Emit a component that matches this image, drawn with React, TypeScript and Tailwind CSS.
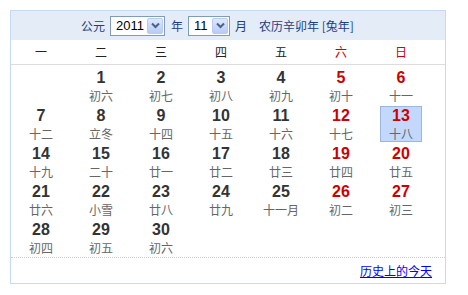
import React from 'react';

type Day = { d: number; l: string; red?: boolean; today?: boolean } | null;

const weeks: Day[][] = [
  [null, { d: 1, l: '初六' }, { d: 2, l: '初七' }, { d: 3, l: '初八' }, { d: 4, l: '初九' }, { d: 5, l: '初十', red: true }, { d: 6, l: '十一', red: true }],
  [{ d: 7, l: '十二' }, { d: 8, l: '立冬' }, { d: 9, l: '十四' }, { d: 10, l: '十五' }, { d: 11, l: '十六' }, { d: 12, l: '十七', red: true }, { d: 13, l: '十八', red: true, today: true }],
  [{ d: 14, l: '十九' }, { d: 15, l: '二十' }, { d: 16, l: '廿一' }, { d: 17, l: '廿二' }, { d: 18, l: '廿三' }, { d: 19, l: '廿四', red: true }, { d: 20, l: '廿五', red: true }],
  [{ d: 21, l: '廿六' }, { d: 22, l: '小雪' }, { d: 23, l: '廿八' }, { d: 24, l: '廿九' }, { d: 25, l: '十一月' }, { d: 26, l: '初二', red: true }, { d: 27, l: '初三', red: true }],
  [{ d: 28, l: '初四' }, { d: 29, l: '初五' }, { d: 30, l: '初六' }, null, null, null, null],
];

const weekdays = ['一', '二', '三', '四', '五', '六', '日'];

function FakeSelect({ value, width }: { value: string; width: string }) {
  return (
    <div className={`flex h-[20px] items-center justify-between border border-[#7f9db9] bg-white ${width}`}>
      <span className="pl-[5px] text-[13px] leading-none text-black font-['Liberation_Sans',sans-serif]">{value}</span>
      <span className="mr-[1px] flex h-[16px] w-[16px] items-center justify-center rounded-[2px] border border-[#b9cbf3] bg-gradient-to-b from-[#dfe8fe] to-[#b6cbf6]">
        <svg width="9" height="7" viewBox="0 0 9 7">
          <path d="M1 1.5 L4.5 5 L8 1.5" fill="none" stroke="#4d6185" strokeWidth="2" />
        </svg>
      </span>
    </div>
  );
}

export default function App() {
  return (
    <div className="pl-[10px] pt-[10px] font-['Noto_Sans_CJK_SC',sans-serif]">
      <div className="flex h-[274px] w-[436px] flex-col border border-[#c6d9f5] bg-white">
        {/* Header */}
        <div className="flex h-[29px] items-center bg-[#e4ecf7] pl-[70px] text-[12px] text-[#1c4080]">
          <span>公元</span>
          <div className="ml-[5px]">
            <FakeSelect value="2011" width="w-[55px]" />
          </div>
          <span className="ml-[6px]">年</span>
          <div className="ml-[5px]">
            <FakeSelect value="11" width="w-[42px]" />
          </div>
          <span className="ml-[5px]">月</span>
          <span className="ml-[12px]">农历辛卯年 [兔年]</span>
        </div>

        {/* Weekdays */}
        <div className="grid h-[25px] grid-cols-[repeat(7,60px)] items-center border-b border-[#dddddd] text-[12px]">
          {weekdays.map((w, i) => (
            <div key={w} className={`text-center ${i >= 5 ? 'text-[#cc0000]' : 'text-[#222222]'}`}>
              {w}
            </div>
          ))}
        </div>

        {/* Days */}
        <div className="grid grid-cols-[repeat(7,60px)] pt-[2px]">
          {weeks.flat().map((day, i) => (
            <div key={i} className="flex h-[38px] items-start justify-center pt-[1px]">
              {day && (
                <div
                  className={`flex h-[36px] w-[42px] flex-col items-center border ${
                    day.today ? 'border-[#9db6e0] bg-[#c2d9fd]' : 'border-transparent'
                  }`}
                >
                  <span
                    className={`h-[17px] text-[16px] font-bold leading-[18px] font-['Liberation_Sans',sans-serif] ${
                      day.red ? 'text-[#cc0000]' : 'text-[#333333]'
                    }`}
                  >
                    {day.d}
                  </span>
                  <span className="mt-[1px] text-[12px] leading-[18px] text-[#666666]">{day.l}</span>
                </div>
              )}
            </div>
          ))}
        </div>

        {/* Footer */}
        <div className="flex flex-1 items-center justify-end border-t border-dotted border-[#cccccc] pr-[13px]">
          <a href="#" className="text-[12px] text-[#0000ff] underline">
            历史上的今天
          </a>
        </div>
      </div>
    </div>
  );
}
